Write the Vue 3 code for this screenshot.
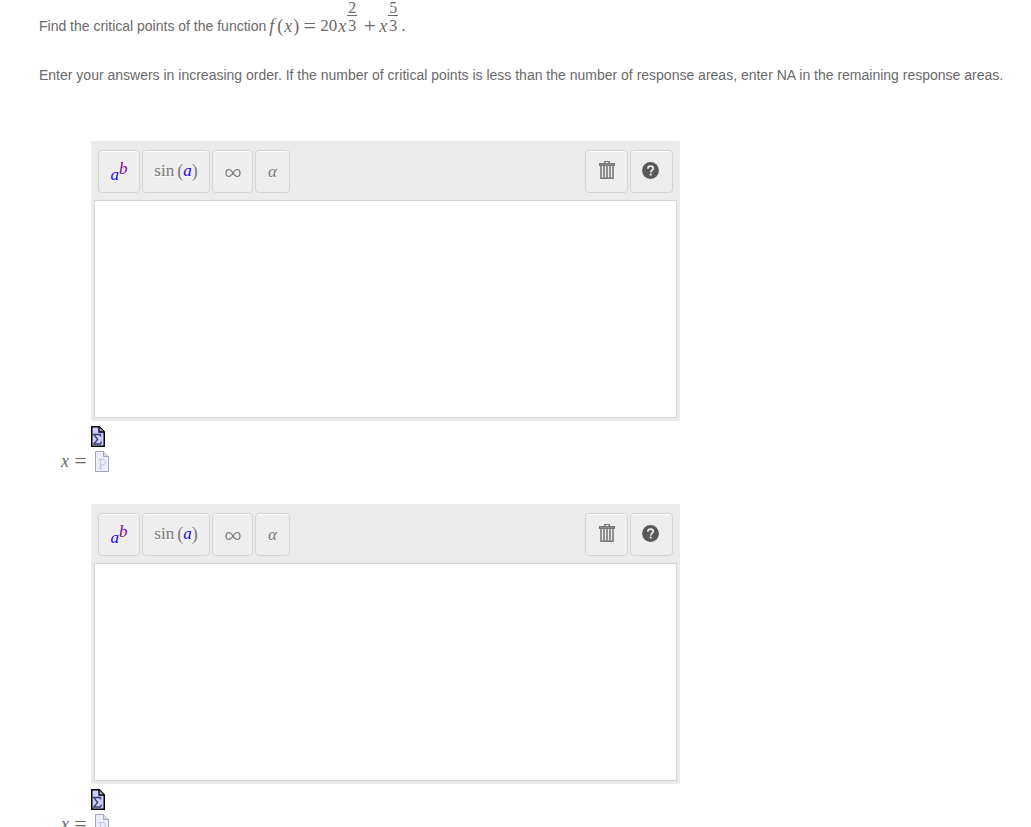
<script setup>
import { ref } from 'vue'

const answers = ref([
  { id: 'answer-1', value: '' },
  { id: 'answer-2', value: '' },
])
</script>

<template>
  <main class="page">
    <p class="question">
      <span>Find the critical points of the function</span>
      <span class="math formula">
        <i class="fn">f</i><span class="paren">(</span><i class="var">x</i><span class="paren">)</span>
        <span class="op">=</span><span class="num">20</span><i class="var">x</i>
        <span class="frac"><span class="top">2</span><span>3</span></span>
        <span class="op plus">+</span><i class="var">x</i>
        <span class="frac"><span class="top">5</span><span>3</span></span>
        <span class="stop">.</span>
      </span>
    </p>
    <p class="hint">
      Enter your answers in increasing order. If the number of critical points is less than the number of response areas, enter NA in the remaining response areas.
    </p>

    <section v-for="answer in answers" :key="answer.id" class="response">
      <div class="editor">
        <div class="toolbar">
          <button type="button" class="tool power" aria-label="Powers"><i class="blue">a</i><i class="exp">b</i></button>
          <button type="button" class="tool sine" aria-label="Functions"><span>sin</span><span class="sparen first">(</span><i class="blue">a</i><span class="sparen">)</span></button>
          <button type="button" class="tool infinity" aria-label="Symbols">
            <svg width="16" height="10" viewBox="0 0 16 10" fill="none" stroke="#777">
              <path stroke-width="1.2" d="M8 5C6.600 2.700 5.400 1.500 3.900 1.500C2.200 1.500 1 3 1 5s1.200 3.500 2.900 3.500C5.400 8.500 6.600 7.300 8 5s2.600-3.500 4.100-3.500C13.800 1.500 15 3 15 5s-1.200 3.500-2.900 3.500C10.600 8.500 9.400 7.300 8 5z" />
            </svg>
          </button>
          <button type="button" class="tool alpha" aria-label="Greek letters"><i>α</i></button>
          <button type="button" class="tool action" aria-label="Clear">
            <svg width="16" height="18" viewBox="0 0 16 18" fill="none" stroke="#777">
              <path fill="#777" stroke="none" d="M5 0h6v2h5v3H0V2h5zM6.500 1v1h3V1z" />
              <path d="M2 5v12.200h12V5M5 5v12M8 5v12M11 5v12" stroke-width="1.600" />
              <path d="M1 3.500h14" stroke="#8c8c8c" />
            </svg>
          </button>
          <button type="button" class="tool action help" aria-label="Help">
            <svg width="17" height="17" viewBox="0 0 18 18" fill="none">
              <circle cx="9" cy="9" r="8.900" fill="#58585a" />
              <path d="M6.200 7.100C6.200 5.300 7.300 4.300 9 4.300s2.900.9 2.900 2.400c0 1.900-2.500 2.100-2.500 4.300" stroke="#eee" stroke-width="1.900" />
              <circle cx="9.200" cy="13.300" r="1.200" fill="#eee" />
            </svg>
          </button>
        </div>
        <textarea :id="answer.id" v-model="answer.value" class="field"></textarea>
      </div>
      <button type="button" class="icon-button sigma" aria-label="Equation editor">
        <svg width="14" height="21" viewBox="0 0 14 21" fill="none">
          <path d="M.75.750h7.500l5 5v14.500H.75z" fill="#ccccff" stroke="#000" stroke-width="1.500" />
          <path d="M8 1v5h5" fill="#aaaabb" stroke="#000" stroke-width="1.300" />
          <path d="M9.500 10.500V8.500H2.700l4 5-4 4.500h6.800l1-2.500" stroke="#3c3c62" stroke-width="1.300" />
        </svg>
      </button>
      <div class="result">
        <label :for="answer.id" class="math equals"><i class="var">x</i><span class="op">=</span></label>
        <button type="button" class="icon-button" aria-label="Preview">
          <svg width="14" height="21" viewBox="0 0 14 21" fill="none">
            <path d="M.5.500h8l5 5v15H.5z" fill="#ececff" stroke="#a6a6aa" />
            <path d="M8.500.500v5h5" fill="#ddd" stroke="#a6a6aa" />
            <path d="M3.500 8.500H8c3.300 0 3.300 5.500 0 5.500H5.500M5.500 8.500v9M3.500 17.500h4" stroke="#c5c5d8" />
          </svg>
        </button>
      </div>
    </section>
  </main>
</template>

<style>
body {
  margin: 0;
  background: #fff;
}
</style>

<style scoped>
.page {
  box-sizing: border-box;
  height: 100vh;
  overflow: hidden;
  padding: 0 24px 0 39px;
  color: #6a6a6a;
  font: 14px/20px "Liberation Sans", Arial, sans-serif;
}
.question {
  display: flex;
  align-items: flex-end;
  gap: 3px;
  height: 36px;
  margin: 0;
}
.hint {
  margin: 29px 0 56px;
}
.math {
  display: flex;
  align-items: flex-end;
  font: 17px/20px "Liberation Serif", "Times New Roman", serif;
}
.fn {
  width: 8px;
  font-size: 18px;
}
.paren {
  width: 6px;
  font-size: 18px;
}
.var {
  width: 10px;
  text-align: center;
  font-size: 18px;
}
.op {
  width: 13px;
  margin: 0 4px;
  text-align: center;
  font-size: 22px;
}
.num {
  width: 17px;
}
.frac {
  display: flex;
  flex-direction: column;
  width: 10px;
  padding-bottom: 2px;
  text-align: center;
  font-size: 16px;
  line-height: 17px;
}
.top {
  margin-bottom: 1px;
  line-height: 15px;
  border-bottom: 1px solid #6a6a6a;
}
.plus {
  margin: 0 2px 0 6px;
}
.stop {
  margin-left: 3px;
}
.response {
  margin: 0 0 32px 52px;
}
.editor {
  box-sizing: border-box;
  max-width: 589px;
  padding: 9px 3px 3px;
  border-radius: 2px;
  background: #ebebeb;
}
.toolbar {
  display: flex;
  gap: 2px;
  padding: 0 4px 7px;
}
.tool {
  box-sizing: border-box;
  display: flex;
  align-items: center;
  justify-content: center;
  height: 43px;
  padding: 0;
  border: 1px solid #d3d3d3;
  border-radius: 4px;
  background: #eee;
  box-shadow: inset 0 1px #fff;
  color: #777;
  font: 17px/20px "Liberation Serif", "Times New Roman", serif;
  text-shadow: 0 1px #fff;
}
.blue {
  color: #1a00f5;
}
.power {
  width: 42px;
}
.power .blue {
  padding-top: 6px;
}
.exp {
  padding-bottom: 6px;
  color: #800080;
}
.sine {
  width: 68px;
  padding-bottom: 2px;
}
.sparen {
  font-size: 18px;
}
.first {
  margin-left: 3px;
}
.infinity {
  width: 41px;
  padding-top: 2px;
}
.alpha {
  width: 35px;
}
.action {
  width: 43px;
  margin-left: auto;
  padding-bottom: 3px;
}
.help {
  margin-left: 0;
  padding-right: 2px;
}
.field {
  box-sizing: border-box;
  display: block;
  width: 100%;
  height: 218px;
  border: 1px solid #d5d5d5;
  outline: none;
  resize: none;
  background: #fff;
}
.icon-button {
  display: block;
  padding: 0;
  border: 0;
  background: none;
}
.icon-button svg {
  display: block;
}
.sigma {
  margin-top: 5px;
}
.result {
  display: flex;
  align-items: flex-start;
  gap: 8px;
  height: 21px;
  margin: 4px 0 0 -31px;
}
.equals .op {
  margin: 0 0 0 4px;
}
</style>
